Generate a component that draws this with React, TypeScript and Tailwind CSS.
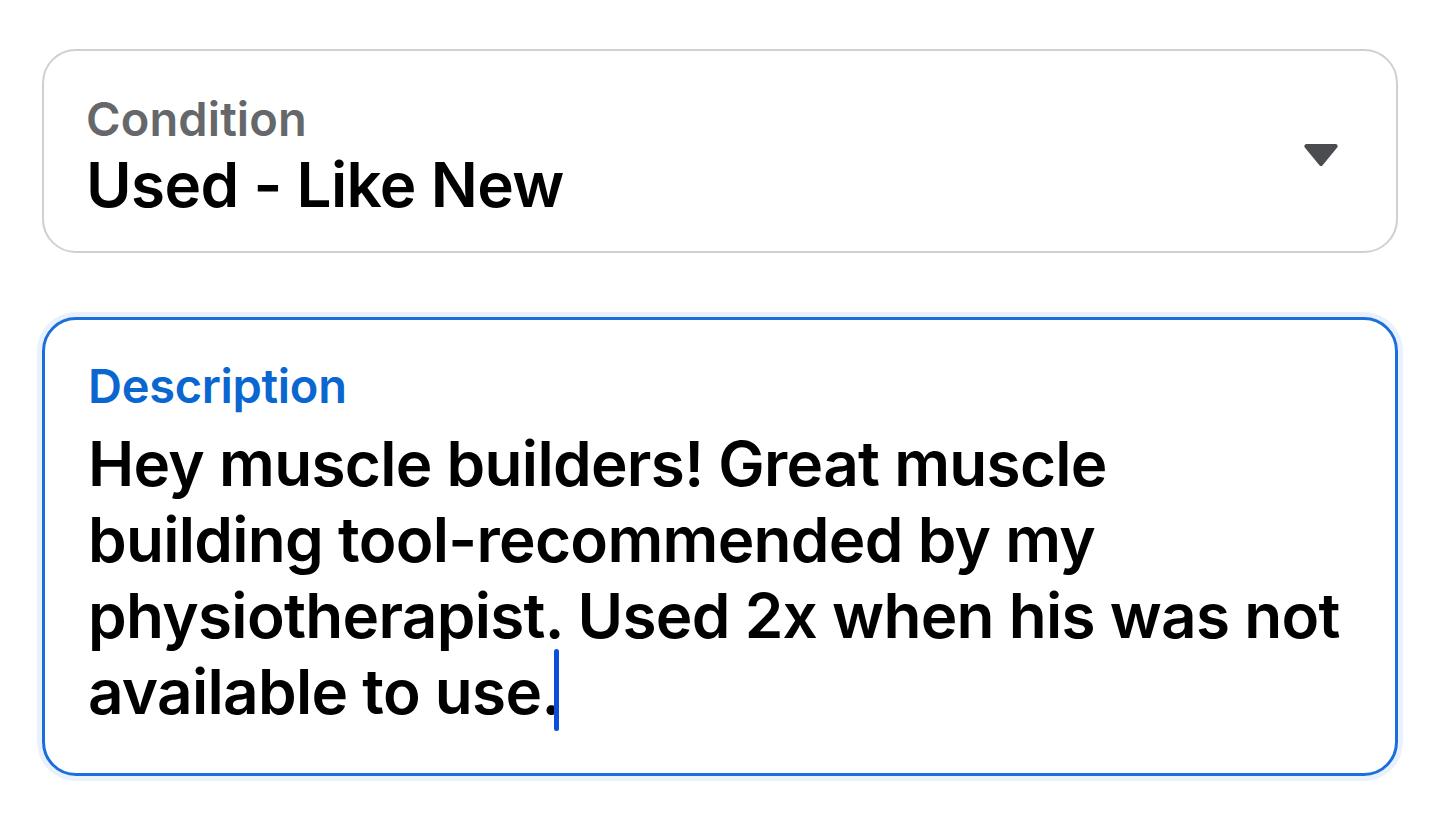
import React from 'react';

const font = { fontFamily: 'Inter, "Noto Sans", sans-serif' };

export default function App() {
    return (
        <div className="min-h-screen w-full bg-white pl-[42px] pr-[42px] pt-[49px]" style={font}>
            {/* Condition select */}
            <div className="flex items-center justify-between rounded-[34px] border-2 border-[#cfd0d2] pl-[42px] pr-[56px] pt-[42px] pb-[30px]">
                <div className="flex flex-col">
                    <span className="text-[47px] leading-[52px] font-semibold text-[#65676b] tracking-[0.1px]">Condition</span>
                    <span className="mt-[4px] text-[62px] leading-[72px] font-semibold text-black tracking-[-0.65px]">Used - Like New</span>
                </div>
                <svg width="38" height="25" viewBox="0 0 36 24" className="-mt-[4px]">
                    <polygon points="4,3 32,3 18,20" fill="#4b4c4f" stroke="#4b4c4f" strokeWidth="4" strokeLinejoin="round" />
                </svg>
            </div>

            {/* Description textarea, focused */}
            <div className="mt-[64px] rounded-[34px] border-[3px] border-[#1b6fdc] shadow-[0_0_0_5px_#e8f1fc] pl-[43px] pr-[40px] pt-[40px] pb-[43px]">
                <div className="text-[47px] leading-[52px] font-semibold text-[#0a66d0] tracking-[-0.3px]">Description</div>
                <div className="mt-[14px] text-[62px] leading-[76px] font-semibold text-black tracking-[-0.7px] whitespace-nowrap">
                    Hey muscle builders! Great muscle<br />
                    building tool-recommended by my<br />
                    physiotherapist. Used 2x when his was not<br />
                    available to use.
                    <span className="relative inline-block h-0 w-0">
                        <span className="absolute left-[-7px] bottom-[-17px] h-[82px] w-[5px] rounded-full bg-[#0b4fd8]" />
                    </span>
                </div>
            </div>
        </div>
    );
}
